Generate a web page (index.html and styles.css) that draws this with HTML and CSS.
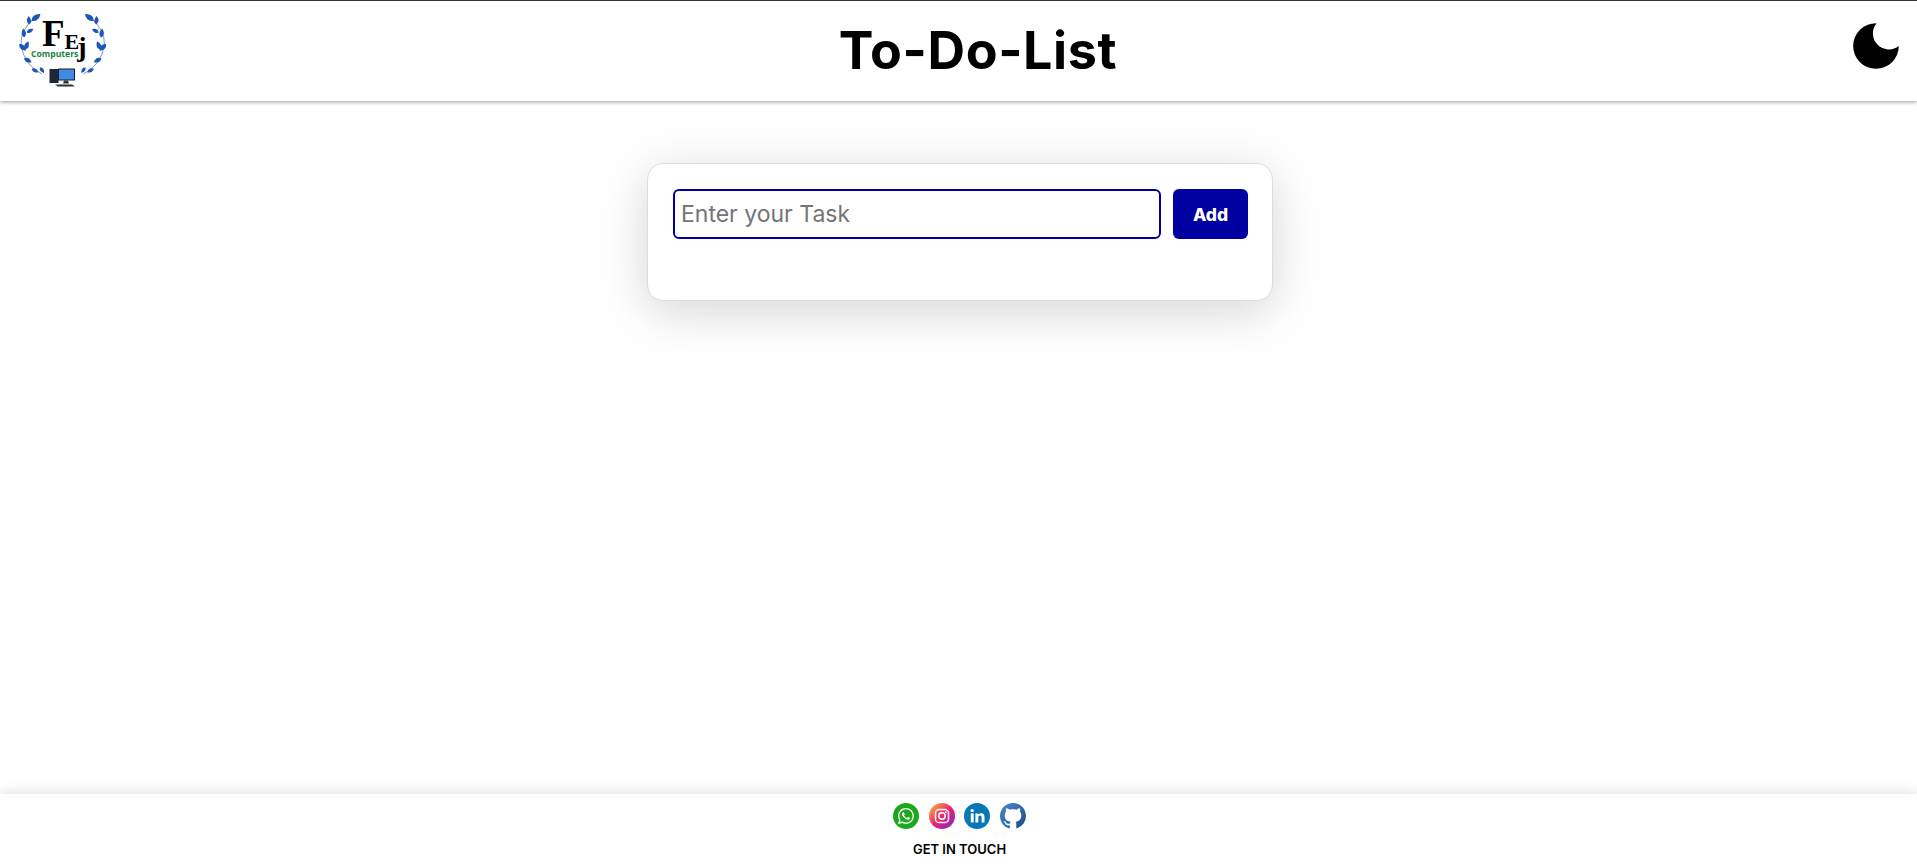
FILE: index.html
```html
<!DOCTYPE html>
<html lang="en">
<head>
<meta charset="utf-8">
<title>To-Do-List</title>
<link rel="stylesheet" href="styles.css">
</head>
<body>
<header class="topbar">
  <svg class="logo" viewBox="16 12 90 80" aria-label="FEj Computers">
    <defs>
      <path id="leaf" d="M0 0Q4 -5 10 0Q4 5 0 0Z"/>
      <g id="branch" fill="#1f55b5">
        <path d="M42 75Q24 66 21 46Q20 30 36 18" fill="none" stroke="#1f55b5" stroke-width=".6"/>
        <use href="#leaf" transform="translate(31.7 21.7) rotate(-37) scale(1.1)"/>
        <use href="#leaf" transform="translate(29.3 25.5) rotate(-94) scale(.85)"/>
        <use href="#leaf" transform="translate(24.3 38.5) rotate(-97) scale(.9)"/>
        <use href="#leaf" transform="translate(26.7 33.5) rotate(-27) scale(.75)"/>
        <use href="#leaf" transform="translate(19.3 45) rotate(45) scale(.95)"/>
        <use href="#leaf" transform="translate(25 50.5) rotate(-68) scale(.9)"/>
        <use href="#leaf" transform="translate(24 59.3) rotate(27) scale(.85)"/>
        <use href="#leaf" transform="translate(31.7 69.8) rotate(27) scale(.75)"/>
        <use href="#leaf" transform="translate(40 68.3) rotate(55) scale(.7)"/>
      </g>
      <linearGradient id="ig" x1="0" y1="0" x2="1" y2="1">
        <stop offset="0" stop-color="#fbc42c"/>
        <stop offset=".5" stop-color="#f0246e"/>
        <stop offset="1" stop-color="#7a1fd0"/>
      </linearGradient>
      <linearGradient id="gh" x1="0" y1="0" x2="1" y2="1">
        <stop offset="0" stop-color="#4f86d2"/>
        <stop offset="1" stop-color="#174a87"/>
      </linearGradient>
    </defs>
    <use href="#branch"/>
    <use href="#branch" transform="matrix(-1 0 0 1 125.4 0)"/>
    <text class="logo-mark" x="42" y="47"><tspan class="logo-f">F</tspan><tspan class="logo-e" dy="3">E</tspan><tspan class="logo-j" dy="7" dx="-2">j</tspan></text>
    <text class="logo-sub" x="31" y="57.5">Computers</text>
    <rect x="49.5" y="70" width="9" height="14" fill="#1d2735"/>
    <rect x="58" y="69.5" width="17" height="12" fill="#17202c"/>
    <rect x="59" y="70.5" width="15" height="10" fill="#3f8ae6"/>
    <path d="M64 81.5h4l1 3h-6z" fill="#333"/>
    <path d="M55 85.5h17l3 2H58z" fill="#2a2f38"/>
  </svg>
  <h1 class="title">To-Do-List</h1>
  <svg class="moon" viewBox="0 0 46 46" aria-label="Dark mode">
    <path d="M23.6 .2A22.8 22.8 0 1 0 45.8 23A16 16 0 0 1 23.6 .2Z"/>
  </svg>
</header>
<main class="content">
  <section class="card">
    <form class="task-form">
      <input class="task-input" type="text" placeholder="Enter your Task">
      <button class="add-btn" type="button">Add</button>
    </form>
  </section>
</main>
<footer class="footer">
  <div class="socials">
    <svg class="social" viewBox="0 0 26 26" aria-label="WhatsApp">
      <circle cx="13" cy="13" r="13" fill="#1ba81c"/>
      <g transform="translate(5 5)" fill="#fff">
        <path d="M13.601 2.326A7.854 7.854 0 0 0 7.994 0C3.627 0 .068 3.558.064 7.926c0 1.399.366 2.76 1.057 3.965L0 16l4.204-1.102a7.933 7.933 0 0 0 3.79.965h.004c4.368 0 7.926-3.558 7.93-7.93A7.898 7.898 0 0 0 13.6 2.326zM7.994 14.521a6.573 6.573 0 0 1-3.356-.92l-.24-.144-2.494.654.666-2.433-.156-.251a6.56 6.56 0 0 1-1.007-3.505c0-3.626 2.957-6.584 6.591-6.584a6.56 6.56 0 0 1 4.66 1.931 6.557 6.557 0 0 1 1.928 4.66c-.004 3.639-2.961 6.592-6.592 6.592zm3.615-4.934c-.197-.099-1.17-.578-1.353-.646-.182-.065-.315-.099-.445.099-.133.197-.513.646-.627.775-.114.133-.232.148-.43.05-.197-.1-.836-.308-1.592-.985-.59-.525-.985-1.175-1.103-1.372-.114-.198-.011-.304.088-.403.087-.088.197-.232.296-.346.1-.114.133-.198.198-.33.065-.134.034-.248-.015-.347-.05-.099-.445-1.076-.612-1.47-.16-.389-.323-.335-.445-.34-.114-.007-.247-.007-.38-.007a.729.729 0 0 0-.529.247c-.182.198-.691.677-.691 1.654 0 .977.71 1.916.81 2.049.098.133 1.394 2.132 3.383 2.992.47.205.84.326 1.129.418.475.152.904.129 1.246.08.38-.058 1.171-.48 1.338-.943.164-.464.164-.86.114-.943-.049-.084-.182-.133-.38-.232z"/>
      </g>
    </svg>
    <svg class="social" viewBox="0 0 26 26" aria-label="Instagram">
      <circle cx="13" cy="13" r="13" fill="url(#ig)"/>
      <rect x="6.5" y="6.5" width="13" height="13" rx="3.6" fill="none" stroke="#fff" stroke-width="1.5"/>
      <circle cx="13" cy="13" r="3.2" fill="none" stroke="#fff" stroke-width="1.5"/>
      <circle cx="16.8" cy="9.2" r=".9" fill="#fff"/>
    </svg>
    <svg class="social" viewBox="0 0 26 26" aria-label="LinkedIn">
      <circle cx="13" cy="13" r="13" fill="#0777b5"/>
      <circle cx="8.2" cy="7.6" r="1.7" fill="#fff"/>
      <rect x="6.8" y="10.4" width="2.9" height="9" fill="#fff"/>
      <path d="M11.4 10.4h2.8v1.3c.6-1 1.7-1.5 2.9-1.5 2.6 0 3.4 1.6 3.4 4v5.2h-2.9v-4.7c0-1.2-.3-2.1-1.5-2.1-1.3 0-1.8.9-1.8 2.1v4.7h-2.9z" fill="#fff"/>
    </svg>
    <svg class="social" viewBox="0 0 16 16" aria-label="GitHub">
      <path fill="url(#gh)" d="M8 0C3.58 0 0 3.58 0 8c0 3.54 2.29 6.53 5.47 7.59.4.07.55-.17.55-.38 0-.19-.01-.82-.01-1.49-2.01.37-2.53-.49-2.69-.94-.09-.23-.48-.94-.82-1.13-.28-.15-.68-.52-.01-.53.63-.01 1.08.58 1.23.82.72 1.21 1.87.87 2.33.66.07-.52.28-.87.51-1.07-1.78-.2-3.64-.89-3.64-3.95 0-.87.31-1.59.82-2.15-.08-.2-.36-1.02.08-2.12 0 0 .67-.21 2.2.82.64-.18 1.32-.27 2-.27.68 0 1.36.09 2 .27 1.53-1.04 2.2-.82 2.2-.82.44 1.1.16 1.92.08 2.12.51.56.82 1.27.82 2.15 0 3.07-1.87 3.75-3.65 3.95.29.25.54.73.54 1.48 0 1.07-.01 1.93-.01 2.2 0 .21.15.46.55.38A8.013 8.013 0 0016 8c0-4.42-3.58-8-8-8z"/>
    </svg>
  </div>
  <p class="touch">GET IN TOUCH</p>
</footer>
</body>
</html>
```
FILE: styles.css
```css
* { box-sizing: border-box; }
html, body { height: 100%; }
body {
  margin: 0;
  height: 867px;
  overflow: hidden;
  display: flex;
  flex-direction: column;
  background: #fff;
  color: #000;
  font-family: Inter, "Open Sans", sans-serif;
}
.topbar {
  height: 101px;
  flex: none;
  display: flex;
  align-items: center;
  justify-content: space-between;
  padding: 0 18px 0 16px;
  border-top: 1px solid #333;
  box-shadow: 0 1px 4px rgba(0, 0, 0, .4);
  position: relative;
}
.logo { width: 90px; height: 80px; }
.logo-mark { font-family: "Liberation Serif", serif; font-weight: 700; }
.logo-f { font-size: 37px; }
.logo-e { font-size: 22px; }
.logo-j { font-size: 28px; }
.logo-sub { font: 700 8.6px "Open Sans", sans-serif; fill: #16853c; }
.title {
  margin: 0 3px 0 0;
  font-size: 52px;
  font-weight: 700;
  line-height: 1;
  letter-spacing: .6px;
}
.moon { width: 46px; height: 46px; margin-bottom: 10px; }
.content { flex: 1; display: flex; flex-direction: column; align-items: center; padding: 62px 0 0 3px; }
.card {
  width: 626px;
  height: 138px;
  padding: 25px 24px 24px 25px;
  background: #fff;
  border: 1px solid #ddd;
  border-radius: 16px;
  box-shadow: 0 10px 50px rgba(0, 0, 0, .17);
}
.task-form { display: flex; gap: 12px; }
.task-input {
  flex: 1;
  min-width: 0;
  height: 50px;
  padding: 0 6px;
  border: 2px solid #0000a0;
  border-radius: 6px;
  outline: none;
  font: 400 23px Inter, sans-serif;
  color: #000;
}
.task-input::placeholder { color: #757575; opacity: 1; }
.add-btn {
  width: 75px;
  height: 50px;
  border: 0;
  border-radius: 6px;
  background: #0000a0;
  color: #fff;
  font: 800 17.5px Inter, sans-serif;
}
.footer {
  height: 73px;
  flex: none;
  display: flex;
  flex-direction: column;
  align-items: center;
  box-shadow: 0 -2px 12px rgba(0, 0, 0, .12);
  padding: 9px 0 0 2px;
  position: relative;
}
.socials { display: flex; gap: 9.5px; }
.social { width: 26px; height: 26px; display: block; }
.touch { margin: 12px 0 0; font-size: 13px; font-weight: 600; line-height: 17px; }
```
